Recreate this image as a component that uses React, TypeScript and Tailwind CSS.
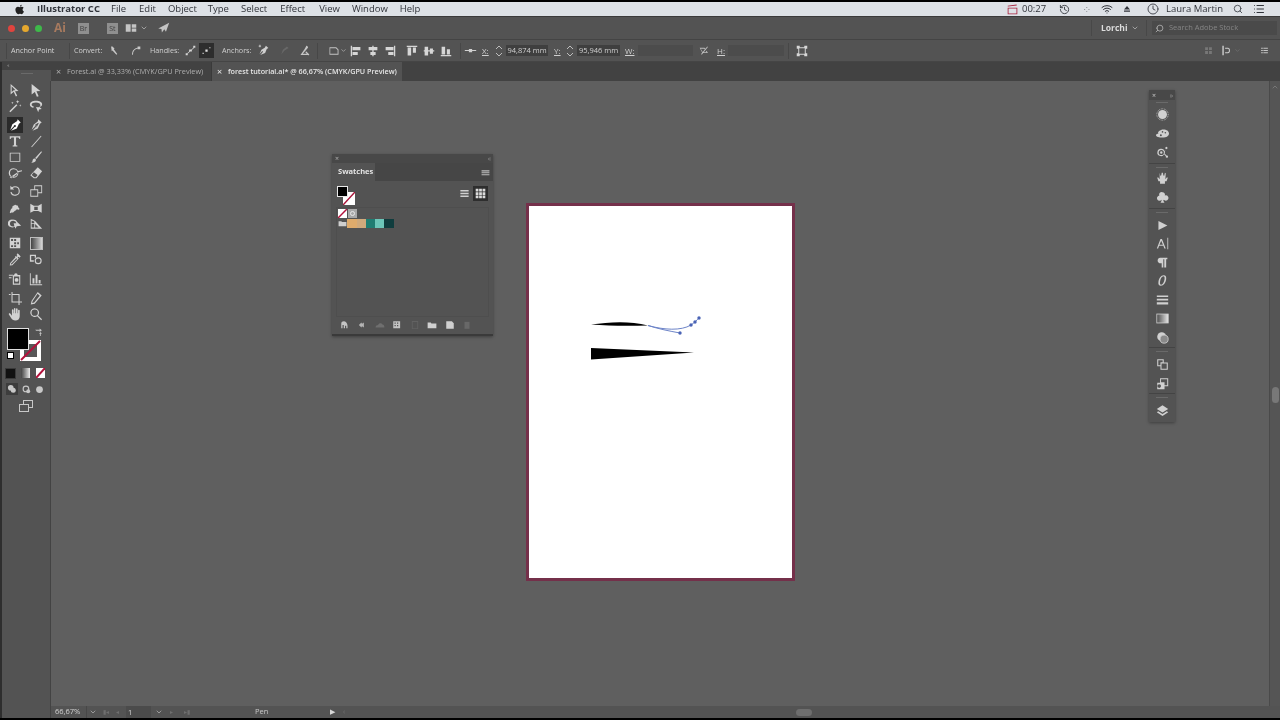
import type { ReactNode } from 'react';
import { ChevronDown, ChevronUp, Clock, History, List, Search, Wifi } from 'lucide-react';

const ui = 'font-["Open_Sans","Liberation_Sans",sans-serif]';

function G({ children, size = 14, className = '' }: { children: ReactNode; size?: number; className?: string }) {
  return (
    <svg width={size} height={size} viewBox="0 0 16 16" fill="currentColor" className={`shrink-0 ${className}`}>
      {children}
    </svg>
  );
}

// tools panel drawings, left column then right column per row
const tools: { y: string; left: ReactNode; right: ReactNode; on?: boolean }[] = [
  {
    y: 'h-[16px]',
    left: <path d="M3 1l9 8-4 .5 2.500 5-1.500.8L6.500 10 3 13zM4.200 3.600v6.700l2.300-2 2 .1z" fillRule="evenodd" />,
    right: <path d="M3 1l10 8-4.500.5L11 15l-2 .8-2.300-5.600L3 13z" />,
  },
  {
    y: 'h-[16px]',
    left: (
      <>
        <path d="M1.500 14l8-8 1.200 1.200-8 8z" />
        <path d="M11 1l.6 1.600L13 3l-1.400.6L11 5l-.6-1.400L9 3l1.400-.4zM14 6l.4 1 1 .4-1 .4-.4 1-.4-1-1-.4 1-.4zM5 3l.4 1 1 .4-1 .4-.4 1-.4-1-1-.4 1-.4z" />
      </>
    ),
    right: <path d="M8 2c4 0 7 1.500 7 4 0 1.500-1 2.500-3 3l2.500 2.500-3 .5-1 3-2.500-6 2 .5c1.500-.3 3-1 3-2.500C13 5 11 4 8 4S3 5 3 6.500c0 1 1 1.700 2.500 2l-.5 1.500C3 9.500 1 8.500 1 6.500 1 3.500 4 2 8 2z" />,
  },
  {
    y: 'h-[16px] mt-[3px]',
    on: true,
    left: <path d="M11 1.500l3.500 3.500-2 1.500-2.500 5.500-6.500 2.500 4-4.200a1.200 1.200 0 10-.8-.8L2.500 13.700 5 7l5.500-3.500z" />,
    right: <path d="M10.500 1.500L14.500 5l-2 1.500-2.500 5.500-6 2.500 3.500-4a1 1 0 10-.8-.8L3 13.500 5.500 7.500 10 4zM6.600 8l4-2.600.5.5-2.400 4.600-1.200-1.300z" fillRule="evenodd" />,
  },
  {
    y: 'h-[16px]',
    left: <path d="M2 2.500h12v3.300h-1c-.2-1.200-.7-1.900-2-1.900H9.200v8.400c0 .6.300.9 1.500.9v1H5.300v-1c1.200 0 1.500-.3 1.500-.9V3.900H5c-1.300 0-1.800.7-2 1.900H2z" />,
    right: <path d="M2.500 14.500l11-12.500.8.700-11 12.500z" />,
  },
  {
    y: 'h-[16px]',
    left: <path d="M2 3h12v10.500H2zM3 4v8.500h10V4z" fillRule="evenodd" />,
    right: <path d="M14 1.500l.8.800-6.300 8-1.500-1.300zM6.300 9.800c1.200.2 1.700 1 1.600 2-.2 1.700-2.700 3-5.400 2.700 1.200-.6 1.500-1.300 1.600-2.400.1-1.200 1-2.500 2.200-2.300z" />,
  },
  {
    y: 'h-[16px]',
    left: <path d="M6.500 2.500a5.500 5.500 0 015 3.200l5-1-.4 1.300-4.300 1.200a5.500 5.500 0 11-5.300-4.700zm0 1.300a4.200 4.200 0 100 8.400 4.200 4.200 0 000-8.400zM2 13l9-6 1 1-8 6z" fillRule="evenodd" />,
    right: <path d="M10 1.500l5 4.500-6.500 8H5.500L1.500 10.500zM5.500 7L3 10.200l3.200 2.700h1.600l2-2.700z" fillRule="evenodd" />,
  },
  {
    y: 'h-[16px] mt-[2px]',
    left: (
      <path d="M8 2.500a5.500 5.500 0 11-5.300 7l1.300-.3A4.200 4.200 0 108 3.800c-1 0-1.900.3-2.600.9L7 6.200H2.700V2l1.800 1.800A5.500 5.500 0 018 2.500z" />
    ),
    right: <path d="M6 1.500h9v9H10.500v4H1.500v-8.500H6zM7 2.500V6h3.500v3.500H14v-7zM2.500 7v6.500h7V7z" fillRule="evenodd" />,
  },
  {
    y: 'h-[16px] mt-[1px]',
    left: <path d="M2 13c1-2 1-4 3-5-.5-1.500.5-3 2-3 .5-1 2-1 2.500 0 1.500-.5 2.500 1 2 2 1.500.5 2 2 1 3-1 0-1.500-.5-2.500-.5-.5 1-1 1.500-2 1.500L7 12l-1.500 1.500-1-.7L3 14z" />,
    right: <path d="M1.500 3l4 2.500h5L14.500 3v10.500l-4-2h-5l-4 2zM6 6.700v3.600h4V6.700z" fillRule="evenodd" />,
  },
  {
    y: 'h-[16px]',
    left: <path d="M6 3a5 4.500 0 014.800 3L15 10l-5 .5-1.500 3-.8-2.500A5 4.500 0 116 3zm0 1.200A3.800 3.300 0 006 10.800c.5 0 .9 0 1.300-.2L6.500 7l3 .2A3.800 3.300 0 006 4.200z" fillRule="evenodd" />,
    right: <path d="M2 2l5 2.500 8 9H2zM3 4v3h3V5zM3 8v4h3V8zM7 8v4h4z" fillRule="evenodd" />,
  },
  {
    y: 'h-[16px] mt-[3px]',
    left: <path d="M2 2h12v12H2zM3.500 3.500v2.300h2.300V3.500zm3.500 0v2.300h2.300V3.500zM10.500 7v2.300h2V7zM7 7v2.300h2.300V7zM3.500 10.500v2h2.300v-2zm3.500 0v2h2.300v-2z" fillRule="evenodd" />,
    right: null,
  },
  {
    y: 'h-[16px]',
    left: <path d="M11 1.500L14.500 5l-1.500 1.500-1-1-1 .8 1.200 1.200-1 1L5 15l-3 .5.500-3L8.500 6l-.5-.5 1-1 1 1 .8-1-1-1zM9.500 7l-6 6-.3 1.300 1.300-.3 6-6z" fillRule="evenodd" />,
    right: <path d="M1 3h7v3.500h-1.500v-2h-4v5h3V11H1zM10.500 6a4 4 0 110 8 4 4 0 010-8zm0 1.300a2.700 2.700 0 100 5.400 2.700 2.700 0 000-5.400z" fillRule="evenodd" />,
  },
  {
    y: 'h-[16px] mt-[4px]',
    left: <path d="M1 3h5v1.200H1zM1 6h3v1.200H1zM9 1.500a2 2 0 012 2h3v11H5.500V3.500H7a2 2 0 012-2zM6.800 5v8h6V5zM9.800 6.800a2.200 2.200 0 110 4.400 2.200 2.200 0 010-4.400z" fillRule="evenodd" />,
    right: <path d="M1 1.500h1V14h13v1H1zM4 7h2.200v6H4zM7.500 3h2.200v10H7.500zM11 9h2.200v4H11z" />,
  },
  {
    y: 'h-[16px] mt-[3px]',
    left: <path d="M4 1h1.200v2.500h8V12H16v1.200h-2.800V16H12v-2.800H4zM5.200 4.700v7.300H12V4.700zM1 3.500h2v1.200H1z" fillRule="evenodd" />,
    right: <path d="M10 1l4.500 4-8 9.500-4.500 1L3 11zM9.800 3.200L4.200 11.400l-.6 2.400 2.300-.6 6.400-7.900z" fillRule="evenodd" />,
  },
  {
    y: 'h-[16px]',
    left: <path d="M7.500 1c.7 0 1 .5 1 1v5h.6V2.500c0-1.300 1.900-1.300 1.900 0V7h.5V4c0-1.300 1.900-1.300 1.900 0v6.500c0 3-2 5-5 5-2.500 0-3.800-1.200-5-3.200L1 8.500c-.5-1.200 1-1.900 1.800-.9L4.500 10V3.500c0-1.300 1.800-1.300 1.900 0V7h.4V2c0-.5.300-1 .7-1z" />,
    right: <path d="M6.500 1.500a5 5 0 013.900 8.100l4.500 4.500-1 1-4.500-4.500A5 5 0 116.500 1.500zm0 1.400a3.600 3.600 0 100 7.200 3.600 3.600 0 000-7.200z" fillRule="evenodd" />,
  },
];

const dockIcons: { key: string; mt: string; after?: string; icon: ReactNode }[] = [
  { key: 'color', mt: 'mt-[5px]', icon: <><circle cx="8" cy="8" r="5.500" /><circle cx="8" cy="8" r="7" fill="none" stroke="currentColor" strokeDasharray="1 1" /></> },
  { key: 'palette', mt: 'mt-[6px]', icon: <path d="M9 3c4 0 7 2 7 5s-3 5-8 5c-4 0-8-1-8-3 0-1.500 2-1.500 3-2-.8-.8-.5-2 .8-3C5.500 3.800 7 3 9 3zm-1 2a1 1 0 100 2 1 1 0 000-2zm3.500 1a1 1 0 100 2 1 1 0 000-2zM6 9a1.200 1.200 0 100 2.400A1.200 1.200 0 006 9z" fillRule="evenodd" /> },
  { key: 'guide', mt: 'mt-[6px]', after: 'mt-[4px]', icon: <path d="M6.500 3.500a4.500 4.500 0 014.100 2.600l2-2-.8-.7a1.400 1.400 0 112 0l-.9.4-2 2.400c.1.400.1.800.1 1.300 0 .7-.1 1.200-.4 1.800l2.300 2.500a1.400 1.400 0 11-.8.800L10 10.300A4.500 4.500 0 116.500 3.500zm0 1.300a3.200 3.200 0 100 6.400 3.200 3.200 0 000-6.400zm0 1.700a1.500 1.500 0 110 3 1.500 1.500 0 010-3z" fillRule="evenodd" /> },
  { key: 'brush', mt: 'mt-[4px]', icon: <path d="M4.500 1l1 4 1-1 .5-3h1.500l.5 3 1 1 1-4 1 .5L11.500 9l2-2.500 1 .5-1.500 4.500H11v3H5v-3H3L1.500 7l1-.5L4.500 9z" /> },
  { key: 'club', mt: 'mt-[6px]', after: 'mt-[4px]', icon: <path d="M8 1.500a3 3 0 012.800 4.100A3.200 3.200 0 1110 11c-.3 0-.7-.1-1-.3.100 1.500.5 2.500 1.500 3.800h-5c1-1.300 1.400-2.300 1.500-3.800a3.200 3.200 0 11-2.800-5.100A3 3 0 018 1.500z" /> },
  { key: 'play', mt: 'mt-[6px]', icon: <path d="M3 2.500L14 8 3 13.500z" /> },
  { key: 'char', mt: 'mt-[5px]', icon: <path d="M5.500 2.500h1.800L12 14h-1.700l-1.200-3.200H3.800L2.600 14H1zm.9 2.200L4.300 9.500h4.200zM14 1h1v14h-1z" fillRule="evenodd" /> },
  { key: 'para', mt: 'mt-[6px]', icon: <path d="M5 2h9v2h-1.500v10h-2.300V4H9v10H7V9H5.800C3.500 9 2 7.500 2 5.500S3.500 2 5 2z" /> },
  { key: 'opentype', mt: 'mt-[5px]', icon: <path d="M9.500 1.500c2.500 0 3.500 2 3 5-.6 4-3 8-6.500 8-2.500 0-3.500-2-3-5 .6-4 3-8 6.500-8zm-.3 1.300c-2 0-3.700 3-4.200 6.500-.3 2.300 0 3.900 1.300 3.900 2 0 3.700-3.200 4.200-6.700.3-2.200-.1-3.700-1.300-3.700z" fillRule="evenodd" /> },
  { key: 'stroke', mt: 'mt-[6px]', icon: <path d="M1 3h14v2H1zM1 7h14v2.300H1zM1 11.500h14V14H1z" /> },
  { key: 'gradient', mt: 'mt-[6px]', icon: <><defs><linearGradient id="dg"><stop offset="0" stopColor="#4a4a4a" /><stop offset="1" stopColor="#e6e6e6" /></linearGradient></defs><rect x="1" y="2.500" width="14" height="11" fill="url(#dg)" stroke="currentColor" /></> },
  { key: 'transp', mt: 'mt-[6px]', after: 'mt-[3px]', icon: <><circle cx="7" cy="7" r="5.500" /><circle cx="10" cy="10" r="5" fill="#8a8a8a" stroke="currentColor" /></> },
  { key: 'layers-a', mt: 'mt-[6px]', icon: <path d="M1.500 1.500h8v4h5v9h-9v-4.500h-4zM2.800 2.800v6h2.700v-3.500h2.700V2.800zM6.800 6.800v6.400h6.400V6.800z" fillRule="evenodd" /> },
  { key: 'artboards', mt: 'mt-[6px]', after: 'mt-[3px]', icon: <path d="M5 1.500h10v10h-4.500v3.500H1.500v-8H5zM6.200 2.700V6.500h4.300v3.800h3.300V2.700zM4 9a2.200 2.200 0 100 4.400A2.200 2.200 0 004 9z" fillRule="evenodd" /> },
  { key: 'layers', mt: 'mt-[6px]', icon: <path d="M8 1.500L15 6l-7 4.500L1 6zM2.700 9l5.300 3.300L13.300 9l1.700 1.200-7 4.500-7-4.500z" /> },
];

function Grip({ className = '' }: { className?: string }) {
  return <div className={`w-[12px] h-px bg-[#6a6a6a] ${className}`} />;
}

function AlignIcon({ kind }: { kind: number }) {
  const shapes = [
    'M2 2h1.500v12H2zM4 3.500h9v3.500H4zM4 9h6v3.500H4z',
    'M7.200 2h1.500v12H7.200zM3 3.500h10v3.500H3zM5 9h6v3.500H5z',
    'M12.500 2H14v12h-1.500zM3 3.500h9v3.500H3zM6 9h6v3.500H6z',
    'M2 2h12v1.500H2zM3 4h4v9H3zM9 4h3.500v6H9z',
    'M2 7.200h12v1.500H2zM3 3h4v10H3zM9 5h3.500v6H9z',
    'M2 12.500h12V14H2zM3 3h4v9H3zM9 6h3.500v6H9z',
  ];
  return (
    <G size={14} className="text-[#d6d6d6]">
      <path d={shapes[kind]} />
    </G>
  );
}

function Spinner() {
  return (
    <svg width="8" height="12" viewBox="0 0 8 12" fill="none" stroke="#bdbdbd" strokeWidth="1" className="shrink-0">
      <path d="M1 4l3-3 3 3M1 8l3 3 3-3" />
    </svg>
  );
}

function MenuBar() {
  const menu = [
    ['File', 'ml-[13px]'],
    ['Edit', 'ml-[13px]'],
    ['Object', 'ml-[12px]'],
    ['Type', 'ml-[11px]'],
    ['Select', 'ml-[12px]'],
    ['Effect', 'ml-[13px]'],
    ['View', 'ml-[14px]'],
    ['Window', 'ml-[12px]'],
    ['Help', 'ml-[12px]'],
  ];
  return (
    <div className="h-[14px] flex items-center bg-[#dde1e6] border-b border-[#3a3a3a] text-[9.5px] text-[#30333a] box-content shrink-0">
      <G size={11} className="ml-[14px] text-[#222]">
        <path d="M11.200 1c.1 1.200-1 2.700-2.500 2.700C8.500 2.400 9.800 1.100 11.200 1zM8.600 4.600c.7 0 1.500-.6 2.700-.6 1 0 2.100.5 2.700 1.400-2.300 1.400-1.900 4.500.4 5.400-.6 1.600-2 4.100-3.400 4.100-.9 0-1.300-.6-2.400-.6s-1.600.6-2.400.6C4.400 14.900 2 11.500 2 8.500c0-3 2-4.500 3.700-4.500 1.200 0 2.200.6 2.900.6z" />
      </G>
      <span className="ml-[12px] w-[61px] font-bold whitespace-nowrap">Illustrator CC</span>
      {menu.map(([label, gap]) => (
        <span key={label} className={gap}>
          {label}
        </span>
      ))}
      <div className="ml-auto flex items-center">
        <G size={11} className="text-[#a8213c]">
          <path d="M1 5.500h14V15H1zM2.200 6.700v7h11.600v-7zM1 2.500L14 .8l.2 1.300L1.200 3.800z" fillRule="evenodd" />
        </G>
        <span className="ml-[4px] w-[28px]">00:27</span>
        <History size={11} className="ml-[9px] text-[#3a3d44]" />
        <span className="ml-[13px] w-[9px] text-[#3a3d44] text-[7px] leading-none text-center">⁘</span>
        <Wifi size={12} className="ml-[9px] text-[#30333a]" />
        <G size={8} className="ml-[10px] text-[#30333a]">
          <path d="M8 2l6 7H2zM2 11h12v2.500H2z" />
        </G>
        <Clock size={12} className="ml-[16px] text-[#4a4d55]" />
        <span className="ml-[7px]">Laura Martin</span>
        <Search size={10} className="ml-[10px] text-[#3a3d44]" />
        <List size={12} className="ml-[10px] mr-[15px] text-[#30333a]" />
      </div>
    </div>
  );
}

function AppBar() {
  return (
    <div className="h-[23px] flex items-center bg-[#535353] border-b border-[#444] shrink-0">
      <span className="ml-[8px] w-[7px] h-[7px] rounded-full bg-[#e0443e] border-[2px] border-[#e0443e]" />
      <span className="ml-[7px] w-[7px] h-[7px] rounded-full bg-[#e6a82e]" />
      <span className="ml-[6px] w-[7px] h-[7px] rounded-full bg-[#3eb94a]" />
      <span className="ml-[12px] text-[12px] font-bold text-[#a77a5f]">Ai</span>
      <span className="ml-[12px] w-[11px] h-[11px] bg-[#8f8f8f] text-[#3f3f3f] text-[7px] leading-[11px] text-center">Br</span>
      <span className="ml-[18px] w-[11px] h-[11px] bg-[#8f8f8f] text-[#3f3f3f] text-[7px] leading-[11px] text-center">St</span>
      <G size={12} className="ml-[7px] text-[#c4c4c4]">
        <path d="M1 3h6.500v10H1zM9 3h6v4.500H9zM9 8.500h6V13H9z" />
      </G>
      <ChevronDown size={8} className="ml-[3px] text-[#c4c4c4]" />
      <G size={13} className="ml-[9px] text-[#c4c4c4]">
        <path d="M15 1L11 12l-2-3-3 4-.5-4.500L1.500 8z" />
      </G>
      <div className="ml-auto flex items-center h-full">
        <span className="w-px h-[16px] bg-[#484848]" />
        <span className="ml-[9px] w-[25px] text-[8.5px] font-bold text-[#dcdcdc] whitespace-nowrap">Lorchi</span>
        <ChevronDown size={8} className="ml-[5px] text-[#c4c4c4]" />
        <span className="ml-[7px] w-px h-[16px] bg-[#484848]" />
        <div className="ml-[5px] mr-[3px] w-[125px] h-[14px] bg-[#4a4a4a] flex items-center pl-[3px] text-[#9a9a9a]">
          <Search size={9} className="text-[#bcbcbc] -scale-x-100" />
          <span className="ml-[5px] text-[7.5px] text-[#858585]">Search Adobe Stock</span>
        </div>
      </div>
    </div>
  );
}

function ControlBar() {
  const num = 'h-[11px] bg-[#3f3f3f] text-[#d0d0d0] text-[7.5px] leading-[11px] text-center whitespace-nowrap';
  const label = 'text-[7.2px] text-[#cfcfcf] whitespace-nowrap';
  const axis = 'text-[8px] text-[#cfcfcf] underline';
  const dim = 'h-[11px] bg-[#4c4c4c]';
  return (
    <div className="h-[22px] flex items-center bg-[#535353] border-b border-[#454545] shrink-0">
      <span className="ml-[6px] w-px h-[16px] bg-[#474747]" />
      <span className="ml-[4px] text-[7.2px] text-[#d4d4d4] w-[42px] whitespace-nowrap">Anchor Point</span>
      <span className="ml-[16px] w-px h-[16px] bg-[#474747]" />
      <span className={`ml-[4px] w-[32px] ${label}`}>Convert:</span>
      <G size={11} className="ml-[3px] text-[#c8c8c8]">
        <path d="M3 2h2l3 3-1 1 5 7-1.200 1L5 8 4 9z" />
      </G>
      <G size={11} className="ml-[10px] text-[#c8c8c8]">
        <path d="M3 14c0-6 3-9 8-10V2h4v4h-4V5.200C7 6.200 4.300 9 4.300 14z" />
      </G>
      <span className={`ml-[9px] w-[33px] ${label}`}>Handles:</span>
      <G size={11} className="ml-[2px] text-[#d6d6d6]">
        <path d="M1 12h3v3H1zM12 1h3v3h-3zM6 6.500h4v3H6zM3.500 11.500l9-8 .7.7-9 8z" />
      </G>
      <span className="ml-[3px] w-[15px] h-[15px] bg-[#2d2d2d] flex items-center justify-center text-[#e0e0e0]">
        <G size={9}>
          <path d="M6 6h4v4H6zM13 2h2v2h-2zM1 12h2v2H1z" />
        </G>
      </span>
      <span className={`ml-[8px] w-[32px] ${label}`}>Anchors:</span>
      <G size={13} className="ml-[3px] text-[#cfcfcf]">
        <path d="M11 2l3 3-2 1-2 5-6 2.500 3.500-4-1-1L3 12.500 5.500 7l4-2.500zM2 2h3v1.200H2zM3 1h1.200v3H3z" />
      </G>
      <G size={13} className="ml-[8px] text-[#686868]">
        <path d="M11 3l2 2-5 3-4 5 2-6z" />
      </G>
      <G size={13} className="ml-[7px] text-[#c4c4c4]">
        <path d="M10 2c2 0 3 2 2 3l-6 7h7v1.500H3l5-7c.5-1.500 2-3 2-4.500zM10 9l4 4-1 1-4-4z" />
      </G>
      <span className="ml-[6px] w-px h-[16px] bg-[#474747]" />
      <G size={12} className="ml-[10px] text-[#c4c4c4]">
        <path d="M2 3h9l3 3v7H2zM3 4.200v7.600h9.800V6.500L10.500 4.200z" fillRule="evenodd" />
      </G>
      <ChevronDown size={7} className="text-[#c4c4c4]" />
      <span className="ml-[2px] flex items-center gap-[3px]">
        <AlignIcon kind={0} />
        <AlignIcon kind={1} />
        <AlignIcon kind={2} />
      </span>
      <span className="ml-[8px] flex items-center gap-[3px]">
        <AlignIcon kind={3} />
        <AlignIcon kind={4} />
        <AlignIcon kind={5} />
      </span>
      <span className="ml-[7px] w-px h-[16px] bg-[#474747]" />
      <G size={13} className="ml-[3px] text-[#d0d0d0]">
        <path d="M1 7.500h14v1H1zM6 6h4v4H6z" />
      </G>
      <span className={`ml-[5px] w-[7px] ${axis}`}>X:</span>
      <span className="ml-[6px]"><Spinner /></span>
      <span className={`ml-[3px] w-[42px] ${num}`}>94,874 mm</span>
      <span className={`ml-[6px] w-[7px] ${axis}`}>Y:</span>
      <span className="ml-[5px]"><Spinner /></span>
      <span className={`ml-[3px] w-[43px] ${num}`}>95,946 mm</span>
      <span className={`ml-[5px] w-[9px] ${axis}`}>W:</span>
      <div className={`ml-[4px] w-[55px] ${dim}`} />
      <G size={11} className="ml-[6px] text-[#bdbdbd]">
        <path d="M1 4h7l2 2-1 1-1.500-1.500H2.500l3 5H11l-1-1 1-1 2 3H5zM12 2l1 1L4 14l-1-1z" />
      </G>
      <span className={`ml-[7px] w-[8px] ${axis}`}>H:</span>
      <div className={`ml-[3px] w-[56px] ${dim}`} />
      <span className="ml-[4px] w-px h-[16px] bg-[#474747]" />
      <G size={12} className="ml-[7px] text-[#d6d6d6]">
        <path d="M1 1h4v2h6V1h4v4h-2v6h2v4h-4v-2H5v2H1v-4h2V5H1zM4.300 4.300v7.400h7.400V4.300z" fillRule="evenodd" />
      </G>
      <div className="ml-auto flex items-center">
        <G size={9} className="text-[#777]">
          <path d="M2 2h5v5H2zM9 2h5v5H9zM2 9h5v5H2zM9 9h5v5H9z" />
        </G>
        <G size={11} className="ml-[8px] text-[#d0d0d0]">
          <path d="M2 1h2v14H2zM6 4h4c2 0 3 1.500 3 4s-1 4-3 4H6v-1.500h4c1 0 1.500-1 1.500-2.500s-.5-2.500-1.500-2.500H6z" />
        </G>
        <ChevronDown size={7} className="ml-[2px] text-[#777]" />
        <G size={9} className="ml-[19px] mr-[11px] text-[#c4c4c4]">
          <path d="M2 3h3v2H2zM6 3h8v2H6zM2 7h3v2H2zM6 7h8v2H6zM2 11h3v2H2zM6 11h8v2H6z" />
        </G>
      </div>
    </div>
  );
}

function TabBar() {
  return (
    <div className="h-[19px] flex bg-[#424242] shrink-0">
      <div className="w-[51px] flex flex-col items-center border-l-[2px] border-l-[#2e2e2e]">
        <div className="h-[8px] w-full pl-[5px] text-[6px] leading-[7px] text-[#8f8f8f] tracking-[-1px]">‹‹</div>
        <div className="flex-1 w-full bg-[#535353] flex justify-center pt-[3px]">
          <Grip />
        </div>
      </div>
      <div className="w-[161px] flex items-center bg-[#424242] border-r border-[#3a3a3a] text-[7.3px] text-[#aeaeae]">
        <span className="ml-[5px] w-[11px] text-[9px] leading-none">×</span>
        <span className="whitespace-nowrap">Forest.ai @ 33,33% (CMYK/GPU Preview)</span>
      </div>
      <div className="w-[190px] flex items-center bg-[#535353] text-[7.2px] text-[#e6e6e6]">
        <span className="ml-[5px] w-[11px] text-[9px] leading-none">×</span>
        <span className="whitespace-nowrap font-semibold">forest tutorial.ai* @ 66,67% (CMYK/GPU Preview)</span>
      </div>
    </div>
  );
}

function ToolBar() {
  return (
    <div className="w-[51px] shrink-0 bg-[#535353] border-r border-[#434343] border-l-[2px] border-l-[#2e2e2e] flex flex-col text-[#d2d2d2] relative">
      <div className="h-px" />
      {tools.map((row, i) => (
        <div key={i} className={`flex items-center pl-[5px] gap-[5px] ${row.y}`}>
          <span className={`w-[16px] h-[16px] flex items-center justify-center ${row.on ? 'bg-[#2a2a2a] text-white' : ''}`}>
            <G size={14}>{row.left}</G>
          </span>
          <span className="w-[16px] h-[16px] flex items-center justify-center">
            {row.right ? (
              <G size={14}>{row.right}</G>
            ) : (
              <span className="w-[13px] h-[13px] border border-[#bdbdbd] bg-gradient-to-r from-[#444] to-[#d8d8d8]" />
            )}
          </span>
        </div>
      ))}
      {/* fill and stroke */}
      <div className="relative h-[36px] mt-[6px] ml-[5px]">
        <div className="absolute left-0 top-0 w-[22px] h-[22px] bg-black border border-[#e0e0e0] z-10" />
        <div className="absolute left-[13px] top-[12px] w-[21px] h-[21px] bg-white p-[4px]">
          <div className="w-full h-full bg-[#585858]" />
          <svg viewBox="0 0 21 21" className="absolute inset-0">
            <path d="M1 20L20 1" stroke="#b3123c" strokeWidth="2" />
          </svg>
        </div>
        <G size={9} className="absolute left-[27px] top-[0px] text-[#c8c8c8]">
          <path d="M2 3h8V1l4 3-4 3V5H4zM12 9v5h-1.500V9zM9 10l2.500-3L14 10z" />
        </G>
        <span className="absolute left-0 top-[24px] w-[7px] h-[7px] bg-white border border-black" />
      </div>
      <div className="h-[12px] mt-[3px] flex items-center pl-[3px] gap-[3px]">
        <span className="w-[11px] h-[11px] bg-[#111] border border-[#3a3a3a]" />
        <span className="ml-[2px] w-[9px] h-[10px] bg-gradient-to-r from-[#444] to-[#eee]" />
        <span className="ml-[3px] relative w-[9px] h-[10px] bg-white overflow-hidden">
          <svg viewBox="0 0 9 10" className="absolute inset-0">
            <path d="M0 10L9 0" stroke="#b3123c" strokeWidth="2" />
          </svg>
        </span>
      </div>
      <div className="h-[12px] mt-[4px] flex items-center pl-[4px] gap-[4px] text-[#c8c8c8]">
        <span className="w-[12px] h-[12px] bg-[#3d3d3d] flex items-center justify-center">
          <G size={10}>
            <circle cx="6" cy="6" r="4.500" />
            <circle cx="10" cy="10" r="4" />
          </G>
        </span>
        <G size={9}>
          <circle cx="7" cy="7" r="5" fill="none" stroke="currentColor" strokeWidth="2" />
          <circle cx="11" cy="11" r="3.500" />
        </G>
        <G size={9}>
          <circle cx="8" cy="8" r="6" />
        </G>
      </div>
      <div className="mt-[3px] flex pl-[16px] text-[#c8c8c8]">
        <G size={16}>
          <path d="M5 2h10v8h-4v4H1V6h4zM6 3v3h5v3h3V3zM2 7v6h8V7z" fillRule="evenodd" />
        </G>
      </div>
    </div>
  );
}

function SwatchesPanel() {
  const footer = [
    ['M2 13V6c0-3 2-4 4-4 3 0 6 3 6 7v4h-2V9H8v4H6V8H4v5z', 'text-[#c4c4c4]'],
    ['M3 8l4-4 1 2 3-2v8l-3-2-1 2z', 'text-[#b4b4b4]'],
    ['M1 12c0-3 2-4 4-4 1-3 5-4 7-1 2 0 3 2 3 5z', 'text-[#6f6f6f]'],
    ['M2 2h11v11H2zM4 4v2h2V4zm4 0v2h2V4zM4 8v2h2V8zm4 0v2h2V8z', 'text-[#c4c4c4]'],
    ['M3 2h10v12H3zM4 3v10h8V3z', 'text-[#686868]'],
    ['M1 4h5l1 1.500h8V13H1z', 'text-[#d0d0d0]'],
    ['M2 2h9l3 3v9H2z', 'text-[#d0d0d0]'],
    ['M4 3h8v11H4z', 'text-[#686868]'],
  ] as const;
  return (
    <div className="absolute left-[281px] top-[73px] w-[161px] h-[182px] bg-[#535353] border-b-[2px] border-[#3a3a3a] shadow-[0_1px_3px_rgba(0,0,0,0.35)] flex flex-col">
      <div className="h-[9px] bg-[#484848] flex items-center justify-between px-[3px] text-[#b0b0b0] text-[7px] leading-none">
        <span>×</span>
        <span className="text-[#8d8d8d] tracking-[-1px]">‹‹</span>
      </div>
      <div className="h-[18px] bg-[#464646] flex items-center">
        <span className="w-[43px] h-full bg-[#535353] flex items-center pl-[6px] text-[7.5px] font-bold text-[#e4e4e4]">Swatches</span>
        <G size={9} className="ml-auto mr-[3px] text-[#bdbdbd]">
          <path d="M1 4h14v2H1zM1 7.500h14v2H1zM1 11h14v2H1z" />
        </G>
      </div>
      <div className="h-[26px] flex relative">
        <div className="absolute left-[5px] top-[5px] w-[11px] h-[11px] bg-black border border-[#e8e8e8] z-10" />
        <div className="absolute left-[11px] top-[11px] w-[12px] h-[13px] bg-white">
          <svg viewBox="0 0 12 13" className="absolute inset-0">
            <path d="M0 13L12 0" stroke="#a8163a" strokeWidth="1.500" />
          </svg>
        </div>
        <G size={11} className="absolute left-[127px] top-[7px] text-[#d0d0d0]">
          <path d="M2 3h12v2H2zM2 7h12v2H2zM2 11h12v2H2z" />
        </G>
        <span className="absolute left-[141px] top-[5px] w-[15px] h-[15px] bg-[#2e2e2e] flex items-center justify-center text-[#dcdcdc]">
          <G size={11}>
            <path d="M1 1h4v4H1zM6 1h4v4H6zM11 1h4v4h-4zM1 6h4v4H1zM6 6h4v4H6zM11 6h4v4h-4zM1 11h4v4H1zM6 11h4v4H6zM11 11h4v4h-4z" />
          </G>
        </span>
      </div>
      <div className="mx-[4px] h-[110px] border border-[#4e4e4e] pl-px pt-px">
        <div className="flex h-[9px]">
          <span className="relative w-[9px] h-[9px] bg-white overflow-hidden">
            <svg viewBox="0 0 9 9" className="absolute inset-0">
              <path d="M0 9L9 0" stroke="#b3123c" strokeWidth="1.500" />
            </svg>
          </span>
          <span className="ml-px w-[9px] h-[9px] bg-[#a9a9a9] flex items-center justify-center">
            <span className="w-[5px] h-[5px] rounded-full border border-[#e8e8e8]" />
          </span>
        </div>
        <div className="flex h-[9px] mt-px items-center">
          <G size={9} className="text-[#cfcfcf]">
            <path d="M1 4h5l1 1.500h8V13H1z" />
          </G>
          <span className="w-[10px] h-[9px] bg-[#dfab6c]" />
          <span className="w-[9px] h-[9px] bg-[#cfa97c]" />
          <span className="w-[9px] h-[9px] bg-[#1f7d72]" />
          <span className="w-[9px] h-[9px] bg-[#6cc6b9]" />
          <span className="w-[10px] h-[9px] bg-[#103d3e]" />
        </div>
      </div>
      <div className="h-[16px] flex items-center pl-[4px]">
        {footer.map(([d, tone], i) => (
          <span key={i} className={`w-[17.5px] flex justify-center ${tone}`}>
            <G size={10}>
              <path d={d} fillRule="evenodd" />
            </G>
          </span>
        ))}
      </div>
    </div>
  );
}

function Artboard() {
  return (
    <div className="absolute left-[478px] top-[125px] w-[263px] h-[372px] bg-white outline outline-[3px] outline-[#74304a]">
      <svg width="263" height="372" viewBox="0 0 263 372" className="absolute inset-0">
        <path d="M62 118.500C80 116 100 114.500 119 119.500 100 120 80 120 62 118.500z" fill="#000" />
        <path d="M62 142v11.500l103-7z" fill="#000" />
        <path d="M119 119.500C135 124 152 125 162 119 165 117 168 114 170 112" fill="none" stroke="#6d84c8" strokeWidth="1" />
        <path d="M119 119.500C130 123 140 125 151 127" fill="none" stroke="#6d84c8" strokeWidth="1" />
        <circle cx="151" cy="127" r="1.700" fill="#4a63b5" />
        <circle cx="162" cy="119" r="1.700" fill="#4a63b5" />
        <circle cx="166" cy="116" r="1.700" fill="#4a63b5" />
        <circle cx="170" cy="112" r="1.700" fill="#4a63b5" />
      </svg>
    </div>
  );
}

function Dock() {
  return (
    <div className="absolute left-[1098px] top-[9px] w-[26px] h-[332px] bg-[#535353] shadow-[0_1px_3px_rgba(0,0,0,0.35)] flex flex-col items-center text-[#d0d0d0]">
      <div className="w-full h-[10px] bg-[#484848] flex items-center justify-between px-[3px] text-[7px] leading-none text-[#c8c8c8]">
        <span>×</span>
        <span className="text-[#9a9a9a] tracking-[-1px]">››</span>
      </div>
      <Grip className="mt-[2px]" />
      {dockIcons.map(item => (
        <div key={item.key} className="w-full flex flex-col items-center">
          <div className={item.mt}>
            <G size={13}>{item.icon}</G>
          </div>
          {item.after && (
            <>
              <div className={`w-full h-px bg-[#444] ${item.after}`} />
              <Grip className="mt-[3px]" />
            </>
          )}
        </div>
      ))}
    </div>
  );
}

function StatusBar() {
  const step = 'text-[#6f6f6f] text-[6px] whitespace-nowrap';
  return (
    <div className="h-[12px] flex items-center bg-[#535353] text-[7.5px] text-[#d2d2d2] shrink-0">
      <span className="ml-[4px] w-[31px]">66,67%</span>
      <span className="w-px h-full bg-[#474747]" />
      <ChevronDown size={8} className="ml-[2px] text-[#bdbdbd]" />
      <span className={`ml-[6px] w-[8px] ${step}`}>▮◂</span>
      <span className={`ml-[5px] w-[6px] ${step}`}>◂</span>
      <span className="ml-[4px] w-[25px] h-full bg-[#4b4b4b] pl-[2px] leading-[12px]">1</span>
      <ChevronDown size={8} className="ml-[4px] text-[#bdbdbd]" />
      <span className={`ml-[7px] w-[6px] ${step}`}>▸</span>
      <span className={`ml-[8px] w-[8px] ${step}`}>▸▮</span>
      <span className="ml-[63px] w-[20px] text-[#c8c8c8]">Pen</span>
      <span className="ml-[55px] w-[7px] text-[#d8d8d8] text-[7px]">▶</span>
      <span className="ml-[6px] w-[4px] text-[#777] text-[7px]">‹</span>
      <div className="ml-[449px] w-[16px] h-[7px] rounded-full bg-[#6e6e6e]" />
    </div>
  );
}

export default function App() {
  return (
    <div className={`w-[1280px] h-[720px] overflow-hidden bg-black flex flex-col blur-[0.35px] ${ui}`}>
      <div className="h-[2px] bg-black shrink-0" />
      <MenuBar />
      <AppBar />
      <ControlBar />
      <TabBar />
      <div className="flex-1 flex min-h-0">
        <ToolBar />
        <div className="flex-1 flex flex-col min-w-0">
          <div className="flex-1 flex min-h-0">
            <div className="flex-1 relative bg-[#5f5f5f]">
              <Artboard />
              <SwatchesPanel />
              <Dock />
            </div>
            <div className="w-[11px] bg-[#555] border-l border-[#4a4a4a] flex flex-col items-center">
              <ChevronUp size={8} className="mt-[2px] text-[#8a8a8a]" />
              <div className="mt-[296px] w-[7px] h-[16px] rounded-full bg-[#787878]" />
            </div>
          </div>
          <StatusBar />
        </div>
      </div>
      <div className="h-[2px] bg-black shrink-0" />
    </div>
  );
}
